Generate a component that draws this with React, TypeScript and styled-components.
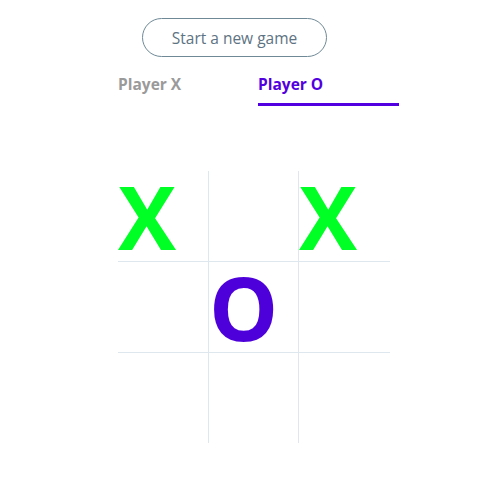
import React from "react";
import styled, { createGlobalStyle } from "styled-components";

const Global = createGlobalStyle`
  html, body { margin: 0; padding: 0; background: #ffffff; }
  body { font-family: "Open Sans", "Noto Sans", sans-serif; }
`;

const Page = styled.div`
  display: flex;
  flex-direction: column;
  align-items: flex-start;
  padding: 18px 0 0 118px;
`;

const NewGameButton = styled.button`
  margin-left: 24px;
  width: 185px;
  height: 39px;
  border: 1px solid #6f8a96;
  border-radius: 20px;
  background: #ffffff;
  color: #5d7383;
  font-family: "Open Sans", "Noto Sans", sans-serif;
  font-size: 15.5px;
  padding: 0;
  cursor: pointer;
`;

const Tabs = styled.div`
  display: grid;
  grid-template-columns: 140px 141px;
  margin-top: 15px;
`;

const Tab = styled.div<{ $active?: boolean }>`
  box-sizing: border-box;
  font-size: 15.5px;
  font-weight: 700;
  line-height: 24px;
  padding-bottom: 7px;
  color: ${(p) => (p.$active ? "#5200e0" : "#9a9a9a")};
  border-bottom: 3px solid ${(p) => (p.$active ? "#5200e0" : "transparent")};
`;

const Board = styled.div`
  margin-top: 65px;
  display: grid;
  grid-template-columns: 91px 90px 91px;
  grid-template-rows: 91px 91px 90px;
`;

const Cell = styled.div<{ $right: boolean; $bottom: boolean; $mark: string }>`
  box-sizing: border-box;
  border-right: ${(p) => (p.$right ? "1px solid #dfe7ee" : "none")};
  border-bottom: ${(p) => (p.$bottom ? "1px solid #dfe7ee" : "none")};
  font-size: 87px;
  font-weight: 700;
  line-height: 90px;
  text-align: left;
  color: ${(p) => (p.$mark === "X" ? "#00ff24" : "#4e00da")};
`;

const board = ["X", "", "X", "", "O", "", "", "", ""];

export default function App() {
  return (
    <>
      <Global />
      <Page>
        <NewGameButton>Start a new game</NewGameButton>
        <Tabs>
          <Tab>Player X</Tab>
          <Tab $active>Player O</Tab>
        </Tabs>
        <Board>
          {board.map((m, i) => (
            <Cell key={i} $mark={m} $right={i % 3 !== 2} $bottom={i < 6}>
              {m}
            </Cell>
          ))}
        </Board>
      </Page>
    </>
  );
}
